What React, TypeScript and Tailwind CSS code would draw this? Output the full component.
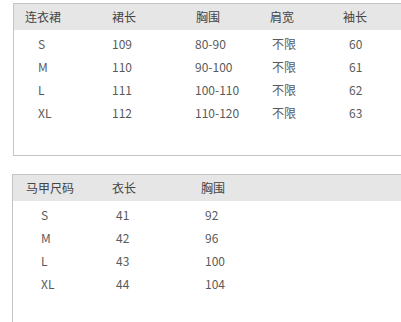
const dress = {
  head: ['连衣裙', '裙长', '胸围', '肩宽', '袖长'],
  rows: [
    ['S', '109', '80-90', '不限', '60'],
    ['M', '110', '90-100', '不限', '61'],
    ['L', '111', '100-110', '不限', '62'],
    ['XL', '112', '110-120', '不限', '63'],
  ],
};

const vest = {
  head: ['马甲尺码', '衣长', '胸围'],
  rows: [
    ['S', '41', '92'],
    ['M', '42', '96'],
    ['L', '43', '100'],
    ['XL', '44', '104'],
  ],
};

// column widths + text offsets, header vs body
const dressCols = [
  { w: 'w-[86px]', h: 'pl-[11px]', d: 'pl-[24px]' },
  { w: 'w-[85px]', h: 'pl-[12px]', d: 'pl-[12px]' },
  { w: 'w-[75px]', h: 'pl-[11px]', d: 'pl-[10px]' },
  { w: 'w-[70px]', h: 'pl-[10px]', d: 'pl-[12px]' },
  { w: 'flex-1', h: 'pl-[13px]', d: 'pl-[19px]' },
];

const vestCols = [
  { w: 'w-[87px]', h: 'pl-[13px]', d: 'pl-[28px]' },
  { w: 'w-[85px]', h: 'pl-[12px]', d: 'pl-[16px]' },
  { w: 'flex-1', h: 'pl-[16px]', d: 'pl-[20px]' },
];

type Col = { w: string; h: string; d: string };

function SizeTable({
  data,
  cols,
  box,
}: {
  data: { head: string[]; rows: string[][] };
  cols: Col[];
  box: string;
}) {
  return (
    <div className={box}>
      <div className="flex h-[26px] items-center bg-[#e6e6e6] text-[#444]">
        {data.head.map((t, i) => (
          <div key={i} className={`${cols[i].w} ${cols[i].h}`}>
            {t}
          </div>
        ))}
      </div>
      <div className="pt-[2px]">
        {data.rows.map((r, ri) => (
          <div key={ri} className="flex h-[23px] items-center text-[#5a5a5a]">
            {r.map((t, i) => (
              <div key={i} className={`${cols[i].w} ${cols[i].d}`}>
                {t}
              </div>
            ))}
          </div>
        ))}
      </div>
    </div>
  );
}

export default function App() {
  return (
    <div className="w-[401px] h-[322px] overflow-hidden bg-white text-[12px] leading-none font-['Noto_Sans_CJK_SC','Noto_Sans',sans-serif]">
      <SizeTable
        data={dress}
        cols={dressCols}
        box="mt-[3px] ml-[13px] h-[153px] border-l border-t border-b border-[#c4c4c4]"
      />
      <SizeTable
        data={vest}
        cols={vestCols}
        box="mt-[18px] ml-[12px] h-[160px] border-l border-t border-[#c4c4c4]"
      />
    </div>
  );
}
